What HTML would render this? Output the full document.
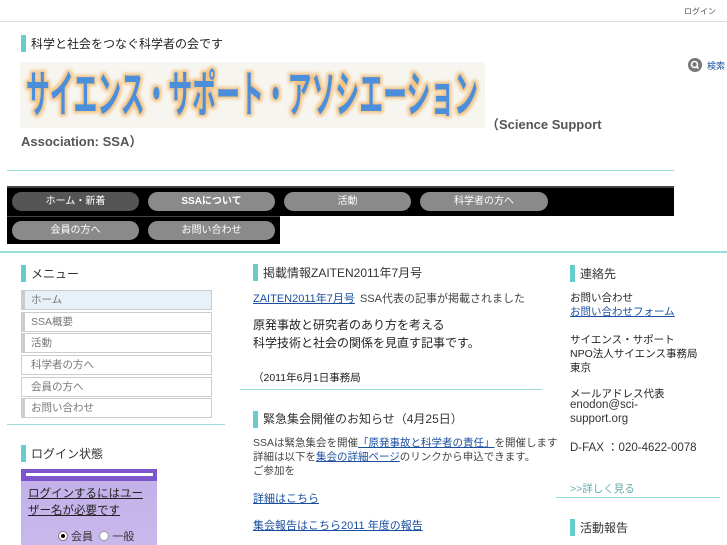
<!DOCTYPE html>
<html><head><meta charset="utf-8">
<style>
*{margin:0;padding:0;box-sizing:border-box}
body{width:727px;height:545px;overflow:hidden;background:#fff;position:relative;font-family:"Liberation Sans","DejaVu Sans","Noto Sans CJK JP",sans-serif;color:#333;font-size:11px}
.a{position:absolute;white-space:nowrap}
.mk{position:absolute;width:5px;background:#66cccc}
.hl{position:absolute;height:2px;background:#99dddd}
.btn{position:absolute;height:19px;border-radius:10px;background:#8a8a8a;color:#fff;font-size:10px;text-align:center;line-height:19px}
.mi{position:absolute;left:21px;width:191px;height:20px;border:1px solid #ccc;border-left:4px solid #ccc;background:#fff;color:#777;font-size:10.5px;line-height:18px;padding-left:6px}
.h{font-size:12px;color:#333}
.lk{color:#1a4fa0;text-decoration:underline}
</style></head><body>
<div class="a" style="left:684px;top:6px;font-size:8px;color:#555">ログイン</div>
<div style="position:absolute;left:0;top:21px;width:727px;height:1px;background:#ddd"></div>

<div class="mk" style="left:21px;top:35px;height:17px"></div>
<div class="a" style="left:31px;top:35px;font-size:12px;color:#222">科学と社会をつなぐ科学者の会です</div>

<svg class="a" style="left:20px;top:62px;background:#f7f5f0" width="465" height="66" viewBox="0 0 465 66">
<defs><filter id="g" x="-5%" y="-20%" width="110%" height="140%"><feMorphology operator="dilate" radius="2" in="SourceAlpha" result="d"/><feGaussianBlur in="d" stdDeviation="1.5" result="b"/><feFlood flood-color="#f2c27e"/><feComposite in2="b" operator="in" result="s"/><feMerge><feMergeNode in="s"/><feMergeNode in="SourceGraphic"/></feMerge></filter></defs>
<text x="6" y="50" textLength="452" lengthAdjust="spacingAndGlyphs" font-family="Noto Sans CJK JP, sans-serif" font-weight="bold" font-size="50" fill="#4b8fdb" filter="url(#g)">サイエンス・サポート・アソシエーション</text>
</svg>
<div class="a" style="left:486px;top:114px;font-size:13px;font-weight:bold;color:#555">（Science Support</div>
<div class="a" style="left:21px;top:131px;font-size:13px;font-weight:bold;color:#555">Association: SSA）</div>

<svg class="a" style="left:688px;top:58px" width="14" height="14" viewBox="0 0 14 14"><circle cx="7" cy="7" r="7" fill="#777"/><circle cx="6.5" cy="6.5" r="3" fill="none" stroke="#fff" stroke-width="1.6"/><line x1="8.6" y1="8.6" x2="10.5" y2="10.5" stroke="#fff" stroke-width="1.8"/></svg>
<div class="a" style="left:707px;top:59px;font-size:9px;color:#1a4fa0">検索</div>

<div class="hl" style="left:7px;top:170px;width:667px;height:1px"></div>

<div style="position:absolute;left:7px;top:186px;width:667px;height:30px;background:#000;border-top:2px solid #444"></div>
<div style="position:absolute;left:7px;top:216px;width:273px;height:28px;background:#000;border-top:1px solid #444"></div>
<div class="btn" style="left:12px;top:192px;width:127px;background:#555">ホーム・新着</div>
<div class="btn" style="left:148px;top:192px;width:127px;font-weight:bold">SSAについて</div>
<div class="btn" style="left:284px;top:192px;width:127px">活動</div>
<div class="btn" style="left:420px;top:192px;width:128px">科学者の方へ</div>
<div class="btn" style="left:12px;top:221px;width:127px">会員の方へ</div>
<div class="btn" style="left:148px;top:221px;width:127px">お問い合わせ</div>

<div class="hl" style="left:0;top:251px;width:727px"></div>

<!-- left -->
<div class="mk" style="left:21px;top:265px;height:17px"></div>
<div class="a h" style="left:31px;top:265px">メニュー</div>
<div class="mi" style="top:290px;background:#e8f0f8">ホーム</div>
<div class="mi" style="top:312px">SSA概要</div>
<div class="mi" style="top:333px">活動</div>
<div class="mi" style="top:355px;border-left:1px solid #ccc;padding-left:9px">科学者の方へ</div>
<div class="mi" style="top:377px;border-left:1px solid #ccc;padding-left:9px">会員の方へ</div>
<div class="mi" style="top:398px">お問い合わせ</div>
<div class="hl" style="left:7px;top:424px;width:218px;height:1px"></div>

<div class="mk" style="left:21px;top:445px;height:17px"></div>
<div class="a h" style="left:31px;top:445px">ログイン状態</div>
<div style="position:absolute;left:21px;top:469px;width:136px;height:76px;background:linear-gradient(#c0b0e8,#c8b8ec)">
<div style="height:12px;background:#7d55cc;position:relative"><div style="position:absolute;left:5px;top:4px;width:127px;height:3px;background:#fff"></div></div>
<div style="position:absolute;left:7px;top:17px;font-size:11.5px;color:#222;text-decoration:underline;line-height:17px;white-space:normal;width:125px">ログインするにはユーザー名が必要です</div>
<div style="position:absolute;left:37px;top:59px;font-size:11px;color:#333"><span style="display:inline-block;width:10px;height:10px;border-radius:50%;border:1px solid #777;background:#fff;vertical-align:-1px;position:relative"><span style="position:absolute;left:2px;top:2px;width:4px;height:4px;border-radius:50%;background:#000"></span></span> 会員 &nbsp;<span style="display:inline-block;width:10px;height:10px;border-radius:50%;border:1px solid #999;background:#fff;vertical-align:-1px"></span> 一般</div>
</div>

<!-- middle -->
<div class="mk" style="left:253px;top:264px;height:17px"></div>
<div class="a h" style="left:263px;top:264px">掲載情報ZAITEN2011年7月号</div>
<div class="a lk" style="left:253px;top:290px;font-size:11px">ZAITEN2011年7月号</div>
<div class="a" style="left:360px;top:290px;font-size:11px;color:#444">SSA代表の記事が掲載されました</div>
<div class="a" style="left:253px;top:316px;font-size:12px;color:#222">原発事故と研究者のあり方を考える</div>
<div class="a" style="left:253px;top:334px;font-size:12px;color:#222">科学技術と社会の関係を見直す記事です。</div>
<div class="a" style="left:253px;top:370px;font-size:10.5px;color:#222">（2011年6月1日事務局</div>
<div class="hl" style="left:240px;top:389px;width:302px;height:1px"></div>
<div class="mk" style="left:253px;top:411px;height:17px"></div>
<div class="a h" style="left:263px;top:410px">緊急集会開催のお知らせ（4月25日）</div>
<div class="a" style="left:253px;top:435px;font-size:10.5px;color:#444">SSAは緊急集会を開催<span class="lk">「原発事故と科学者の責任」</span>を開催します</div>
<div class="a" style="left:253px;top:449px;font-size:10.5px;color:#444">詳細は以下を<span class="lk">集会の詳細ページ</span>のリンクから申込できます。</div>
<div class="a" style="left:253px;top:463px;font-size:10.5px;color:#444">ご参加を</div>
<div class="a lk" style="left:253px;top:490px;font-size:11px">詳細はこちら</div>
<div class="a lk" style="left:253px;top:517px;font-size:11px">集会報告はこちら2011 年度の報告</div>

<!-- right -->
<div class="mk" style="left:570px;top:265px;height:17px"></div>
<div class="a h" style="left:580px;top:265px">連絡先</div>
<div class="a" style="left:570px;top:290px;font-size:10.5px;color:#222">お問い合わせ</div>
<div class="a lk" style="left:570px;top:304px;font-size:10.5px">お問い合わせフォーム</div>
<div class="a" style="left:570px;top:332px;font-size:10.5px;color:#222">サイエンス・サポート</div>
<div class="a" style="left:570px;top:346px;font-size:10.5px;color:#222">NPO法人サイエンス事務局</div>
<div class="a" style="left:570px;top:360px;font-size:10.5px;color:#222">東京</div>
<div class="a" style="left:570px;top:386px;font-size:10.5px;color:#222">メールアドレス代表</div>
<div class="a" style="left:570px;top:399px;font-size:11.5px;color:#333">enodon@sci-</div>
<div class="a" style="left:570px;top:413px;font-size:11.5px;color:#333">support.org</div>
<div class="a" style="left:570px;top:439px;font-size:11.5px;color:#333">D-FAX ：020-4622-0078</div>
<div class="a" style="left:570px;top:481px;font-size:10.5px;color:#6aa">&gt;&gt;詳しく見る</div>
<div class="hl" style="left:556px;top:497px;width:164px;height:1px"></div>
<div class="mk" style="left:570px;top:519px;height:17px"></div>
<div class="a h" style="left:580px;top:519px">活動報告</div>
</body></html>
